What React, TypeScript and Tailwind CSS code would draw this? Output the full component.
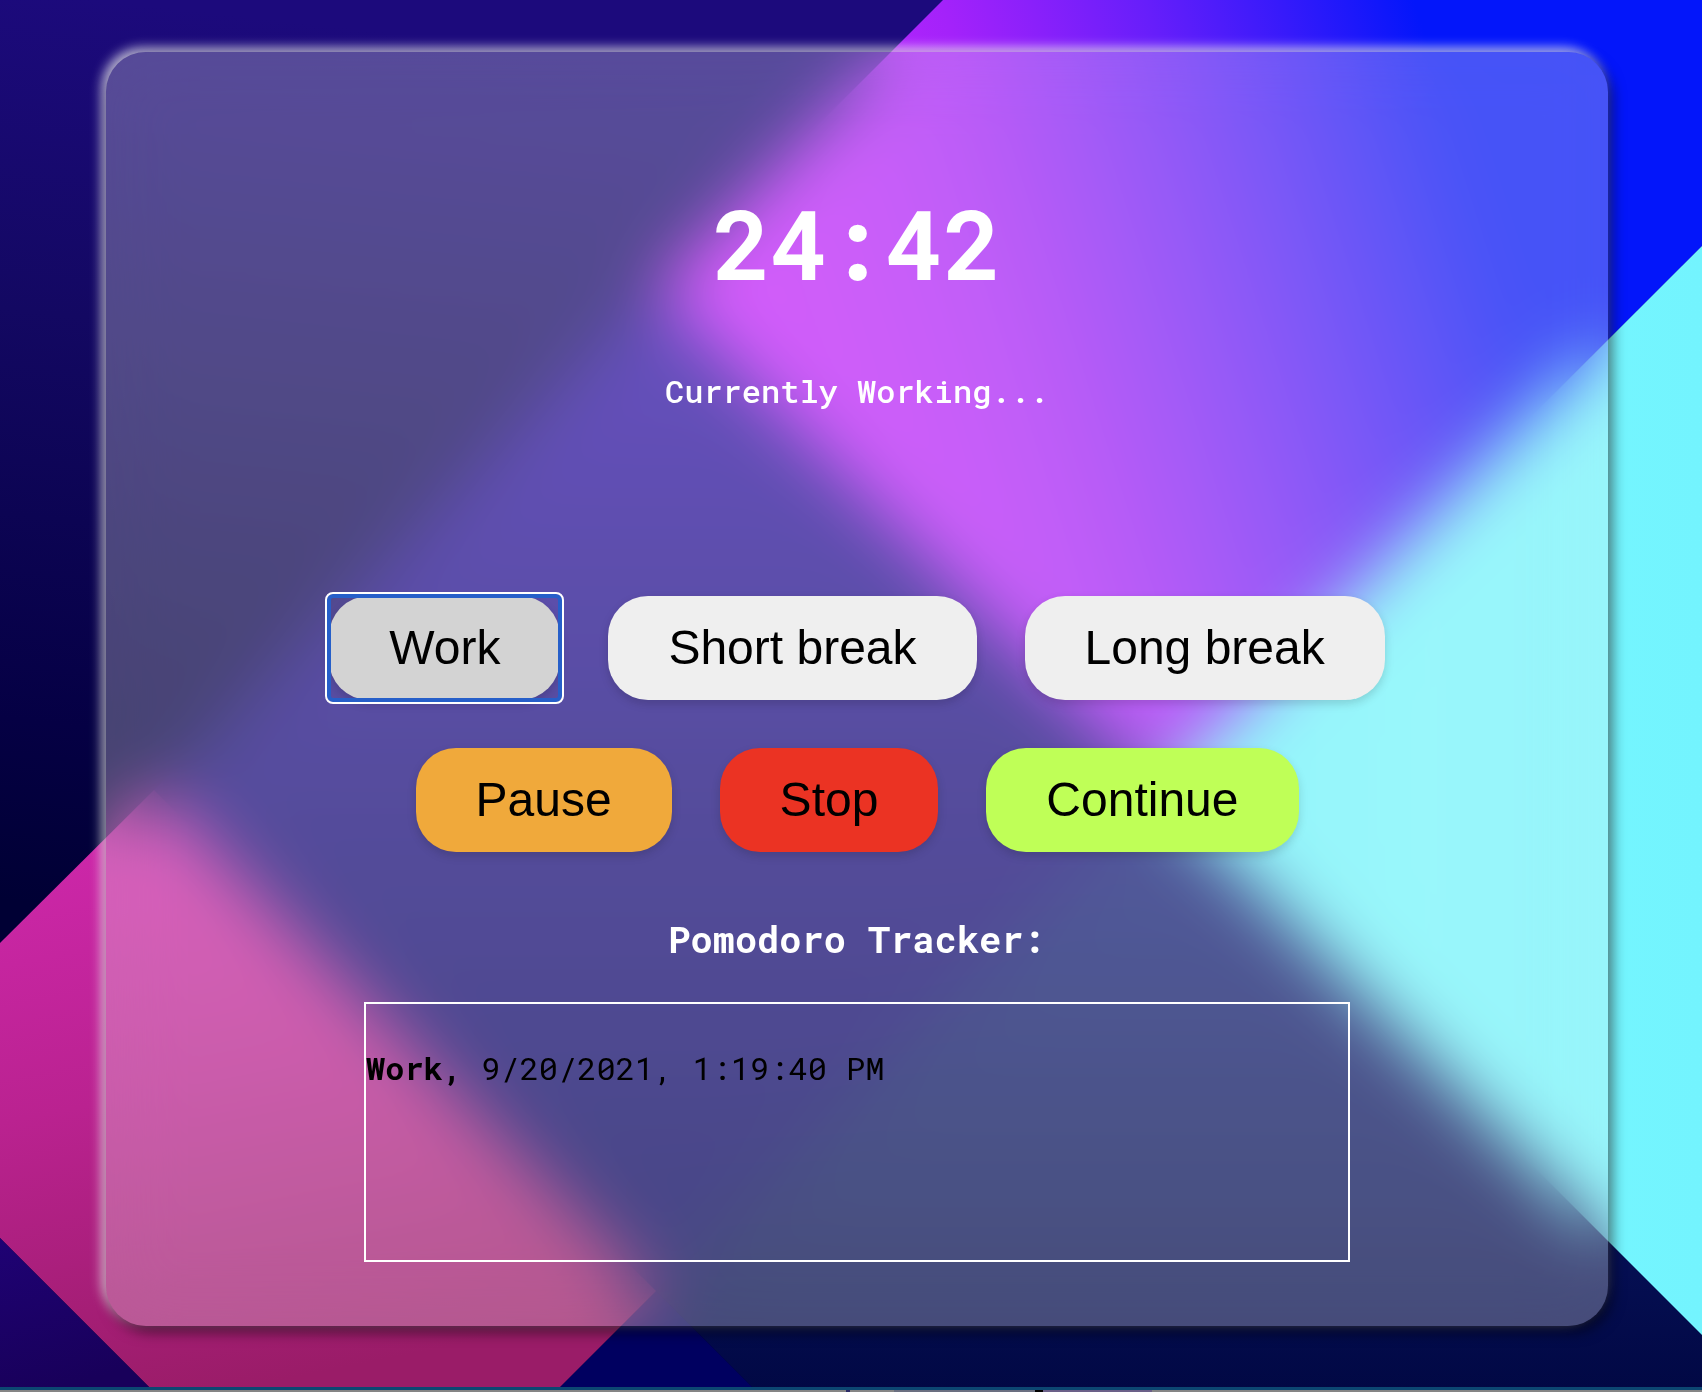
import React from "react";

function Backdrop() {
  return (
    <svg
      aria-hidden="true"
      className="absolute inset-0 h-full w-full"
      viewBox="0 0 1702 1392"
      preserveAspectRatio="xMidYMid slice"
    >
      <defs>
        <linearGradient id="night" gradientUnits="userSpaceOnUse" x1="100" y1="0" x2="0" y2="900">
          <stop offset="0" stopColor="#1c0a7c" />
          <stop offset="0.35" stopColor="#130862" />
          <stop offset="0.8" stopColor="#050044" />
          <stop offset="1" stopColor="#000034" />
        </linearGradient>
        <linearGradient id="violet" gradientUnits="userSpaceOnUse" x1="700" y1="420" x2="1510" y2="160">
          <stop offset="0" stopColor="#cc20ff" />
          <stop offset="0.28" stopColor="#b826fc" />
          <stop offset="0.42" stopColor="#a422fa" />
          <stop offset="0.52" stopColor="#8a20fa" />
          <stop offset="0.65" stopColor="#661efa" />
          <stop offset="0.8" stopColor="#361afa" />
          <stop offset="0.95" stopColor="#0316fa" />
        </linearGradient>
        <linearGradient id="indigo" gradientUnits="userSpaceOnUse" x1="0" y1="350" x2="0" y2="1200">
          <stop offset="0" stopColor="#2e10a8" />
          <stop offset="0.5" stopColor="#190c7e" />
          <stop offset="1" stopColor="#070460" />
        </linearGradient>
        <linearGradient id="deep" gradientUnits="userSpaceOnUse" x1="0" y1="850" x2="0" y2="1392">
          <stop offset="0" stopColor="#121e7a" />
          <stop offset="0.6" stopColor="#08135c" />
          <stop offset="1" stopColor="#010844" />
        </linearGradient>
        <linearGradient id="pink" gradientUnits="userSpaceOnUse" x1="100" y1="790" x2="220" y2="1392">
          <stop offset="0" stopColor="#d028ae" />
          <stop offset="0.5" stopColor="#ba2290" />
          <stop offset="1" stopColor="#9a1c68" />
        </linearGradient>
        <linearGradient id="cyan" gradientUnits="userSpaceOnUse" x1="1157" y1="800" x2="1702" y2="800">
          <stop offset="0" stopColor="#6cf4ff" />
          <stop offset="0.45" stopColor="#76f8ff" />
          <stop offset="1" stopColor="#73f4fe" />
        </linearGradient>
        <linearGradient id="corner" gradientUnits="userSpaceOnUse" x1="0" y1="1238" x2="40" y2="1392">
          <stop offset="0" stopColor="#1f0274" />
          <stop offset="1" stopColor="#18005a" />
        </linearGradient>
      </defs>
      <rect width="1702" height="1392" fill="url(#night)" />
      <path d="M943 0 H1702 V246 L1157 790 L655 288 Z" fill="url(#violet)" />
      <path d="M655 288 L1157 790 L656 1291 L154 790 Z" fill="url(#indigo)" />
      <path d="M1157 790 L1759 1392 H757 L656 1291 Z" fill="url(#deep)" />
      <path d="M656 1291 L757 1392 H555 Z" fill="#000060" />
      <path d="M1702 246 V1335 L1157 790 Z" fill="url(#cyan)" />
      <path d="M154 790 L656 1291 L555 1392 H154 L0 1238 V943 Z" fill="url(#pink)" />
      <path d="M0 1238 L154 1392 H0 Z" fill="url(#corner)" />
    </svg>
  );
}

const buttonBase =
  "relative rounded-[40px] px-[60px] py-6 font-['Liberation_Sans',Arial,sans-serif] text-5xl leading-[56px] text-black shadow-[0_4px_10px_rgba(0,0,0,0.15)]";

type ActionProps = { label: string; className: string };

function Action({ label, className }: ActionProps) {
  return (
    <button type="button" className={`${buttonBase} ${className}`}>
      {label}
    </button>
  );
}

export default function App() {
  return (
    <main className="relative flex min-h-screen flex-col overflow-hidden bg-[#01083f] font-['Roboto_Mono','DejaVu_Sans_Mono',monospace]">
      <Backdrop />
      <section className="relative mt-[52px] mr-[94px] mb-[61px] ml-[106px] flex flex-col items-center rounded-[40px] bg-[#f6f6f0]/28 px-8 pt-[143px] pb-16 shadow-[4px_6px_14px_rgba(0,0,0,0.55),-4px_-4px_12px_rgba(255,255,255,0.75)] backdrop-blur-[34px]">
        <h1 className="text-8xl leading-[96px] font-bold text-white">24:42</h1>
        <p className="mt-20 text-[32px] leading-10 font-medium text-white">Currently Working...</p>

        <div className="mt-[185px] flex flex-wrap justify-center gap-12">
          <Action
            label="Work"
            className="bg-[#d3d3d3] after:absolute after:-inset-[2px] after:rounded-md after:border-4 after:border-[#265fc9] after:outline-2 after:outline-white after:content-['']"
          />
          <Action label="Short break" className="bg-[#efefef]" />
          <Action label="Long break" className="bg-[#efefef]" />
        </div>
        <div className="mt-12 flex flex-wrap justify-center gap-12">
          <Action label="Pause" className="bg-[#f0a93b]" />
          <Action label="Stop" className="bg-[#eb3323]" />
          <Action label="Continue" className="bg-[#bfff57]" />
        </div>

        <h2 className="mt-[63px] text-[37px] leading-[48px] font-bold text-white">Pomodoro Tracker:</h2>
        <div className="mt-[39px] min-h-[260px] w-[986px] max-w-full border-2 border-white pt-11">
          <p className="text-[32px] leading-10 text-black">
            <strong className="font-bold">Work,</strong> 9/20/2021, 1:19:40 PM
          </p>
        </div>
      </section>
      <div aria-hidden="true" className="relative mt-auto flex h-[5px] border-t-3 border-[#0c4772] bg-[#858585]">
        <div className="ml-[49.7%] w-1 bg-[#2a2a66]" />
        <div className="ml-[2.6%] w-[8.3%] bg-[#6b6f80]" />
        <div className="w-2 bg-black" />
        <div className="w-[6.4%] bg-[#6b6088]" />
      </div>
    </main>
  );
}
